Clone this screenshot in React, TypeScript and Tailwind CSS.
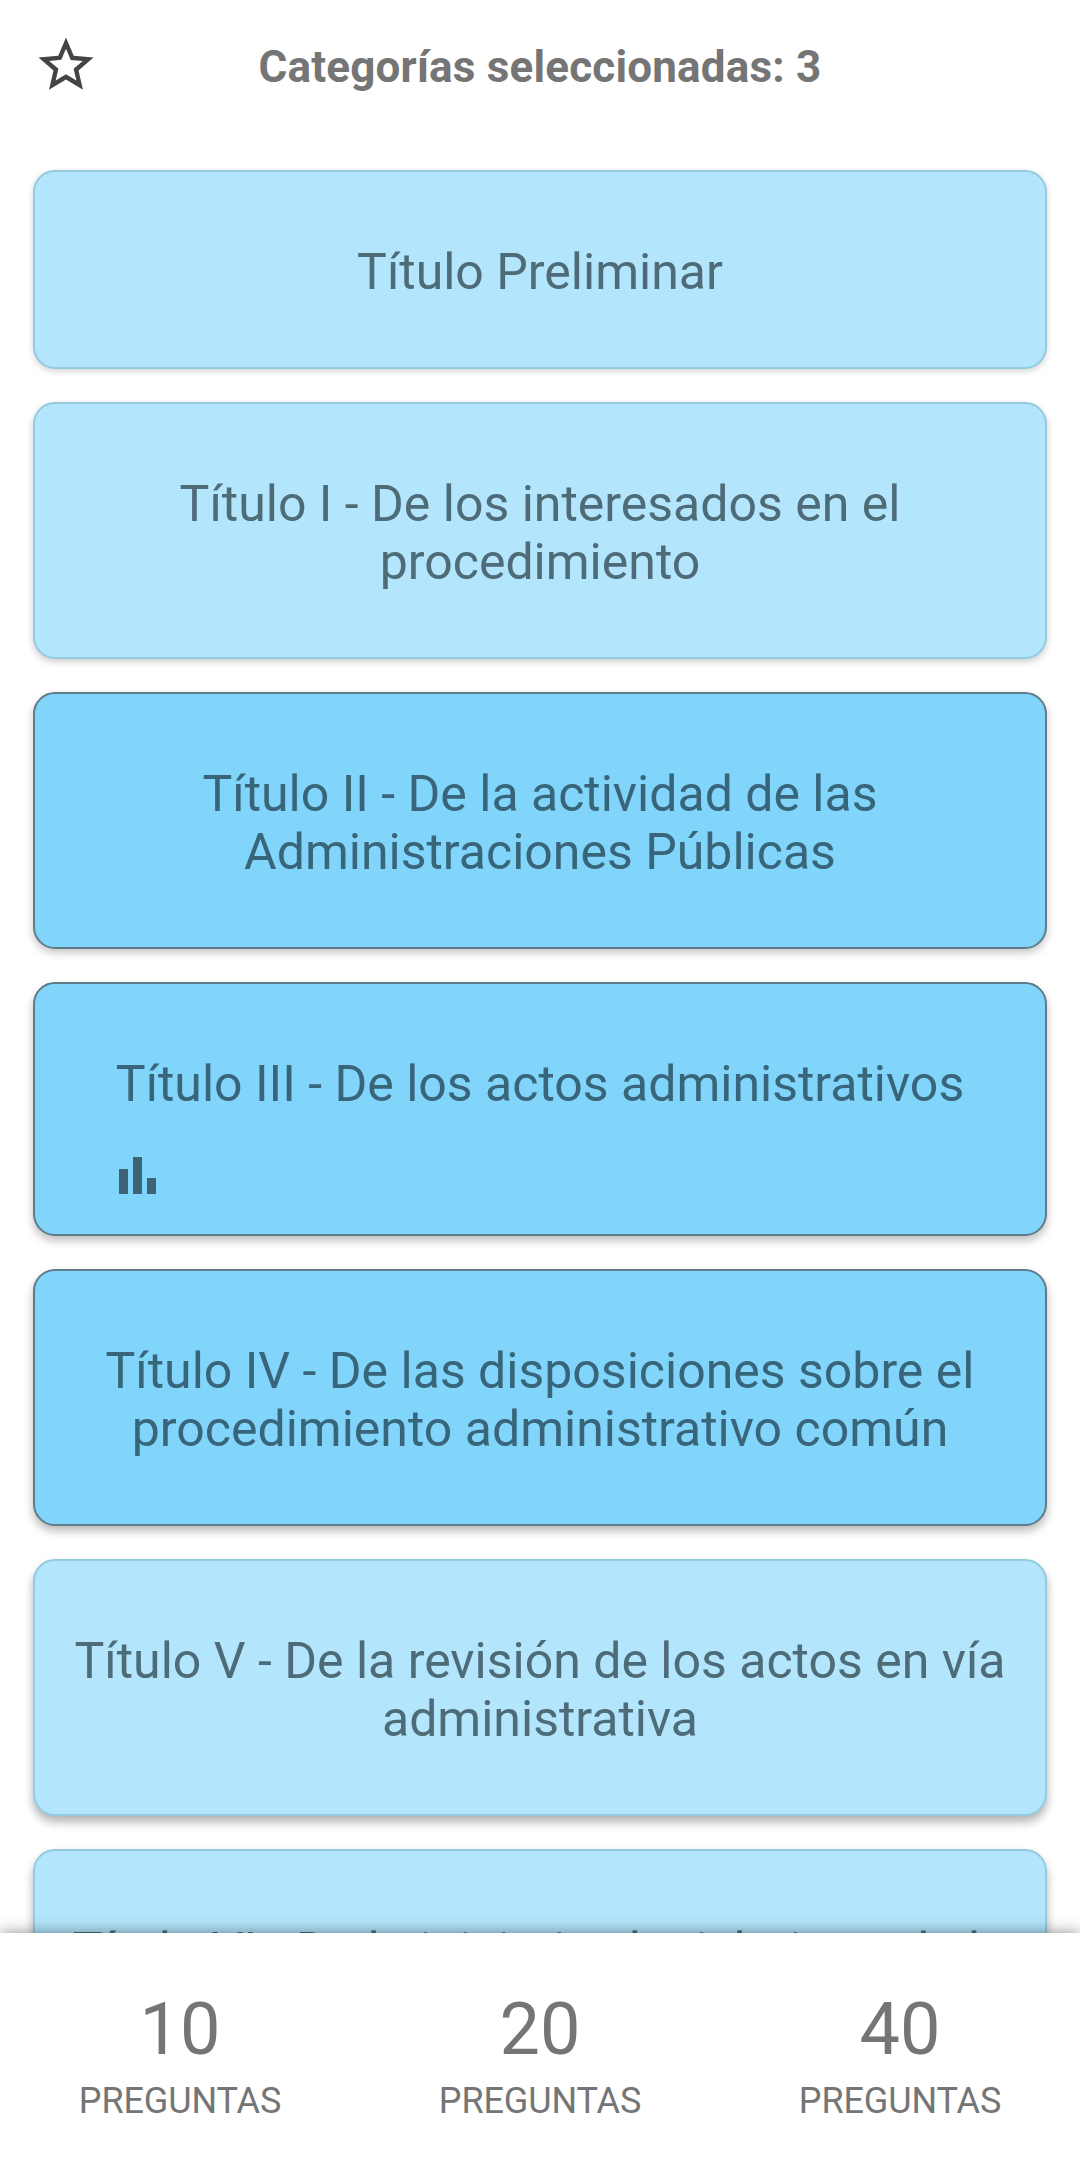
import clsx from "clsx";

const categories = [
  { title: "Título Preliminar", selected: false, stats: false, size: "h-[199px] shadow-[0_2px_6px_rgba(0,0,0,0.18)]" },
  { title: "Título I - De los interesados en el procedimiento", selected: false, stats: false, size: "h-[257px] shadow-[0_3px_7px_rgba(0,0,0,0.2)]" },
  { title: "Título II - De la actividad de las Administraciones Públicas", selected: true, stats: false, size: "h-[257px] shadow-[0_4px_8px_rgba(0,0,0,0.22)]" },
  { title: "Título III - De los actos administrativos", selected: true, stats: true, size: "h-[254px] shadow-[0_5px_9px_rgba(0,0,0,0.25)]" },
  { title: "Título IV - De las disposiciones sobre el procedimiento administrativo común", selected: true, stats: false, size: "h-[257px] shadow-[0_5px_10px_rgba(0,0,0,0.28)]" },
  { title: "Título V - De la revisión de los actos en vía administrativa", selected: false, stats: false, size: "h-[257px] shadow-[0_6px_10px_rgba(0,0,0,0.3)]" },
  { title: "Título VI - De la iniciativa legislativa y de la", selected: false, stats: false, size: "h-[257px] shadow-[0_6px_10px_rgba(0,0,0,0.3)]" },
];

const amounts = [10, 20, 40];

export default function App() {
  return (
    <div className="flex h-[2158px] w-[1080px] flex-col overflow-hidden bg-white font-['Roboto',sans-serif]">
      <header className="flex h-[134px] shrink-0 items-center px-[33px]">
        <svg viewBox="0 0 24 24" className="-mt-[5px] size-[66px] fill-[#444]">
          <path d="M22 9.24l-7.19-.62L12 2 9.19 8.63 2 9.24l5.46 4.73L5.82 21 12 17.27 18.18 21l-1.63-7.03L22 9.24zM12 15.4l-3.76 2.27 1-4.28-3.32-2.88 4.38-.38L12 6.1l1.71 4.04 4.38.38-3.32 2.88 1 4.28L12 15.4z" />
        </svg>
        <h1 className="flex-1 pr-[66px] text-center text-[44px] font-bold tracking-[0.18px] text-[#757575]">
          Categorías seleccionadas: 3
        </h1>
      </header>

      <main className="flex min-h-0 flex-1 flex-col gap-[33px] overflow-hidden px-[33px] pt-[36px]">
        {categories.map((c) => (
          <button
            key={c.title}
            className={clsx(
              "flex shrink-0 flex-col rounded-[22px] border-2 px-[31px] pt-[71px]",
              c.size,
              c.selected ? "border-[#5f7c8a] bg-[#81d4fa]" : "border-[#94cbe0] bg-[#b3e5fc]"
            )}
          >
            <span className={clsx("w-full text-center text-[50px] leading-[58px]", c.selected ? "text-[#386579]" : "text-[#4e6b78]")}>
              {c.title}
            </span>
            {c.stats && (
              <svg viewBox="0 0 37 37" className="mt-[44px] ml-[53px] size-[37px] fill-[#3c6376]">
                <path d="M0 12h9v25H0zM14 0h9v37h-9zM28 21h9v16h-9z" />
              </svg>
            )}
          </button>
        ))}
      </main>

      <footer className="z-10 grid h-[225px] shrink-0 grid-cols-3 bg-white pt-[55px] shadow-[0_-1px_14px_rgba(0,0,0,0.4)]">
        {amounts.map((n) => (
          <button key={n} className="flex flex-col items-center justify-start text-[#757575]">
            <span className="text-[72px] leading-[84px]">{n}</span>
            <span className="text-[36px] leading-[58px] tracking-[-0.1px]">PREGUNTAS</span>
          </button>
        ))}
      </footer>
    </div>
  );
}
